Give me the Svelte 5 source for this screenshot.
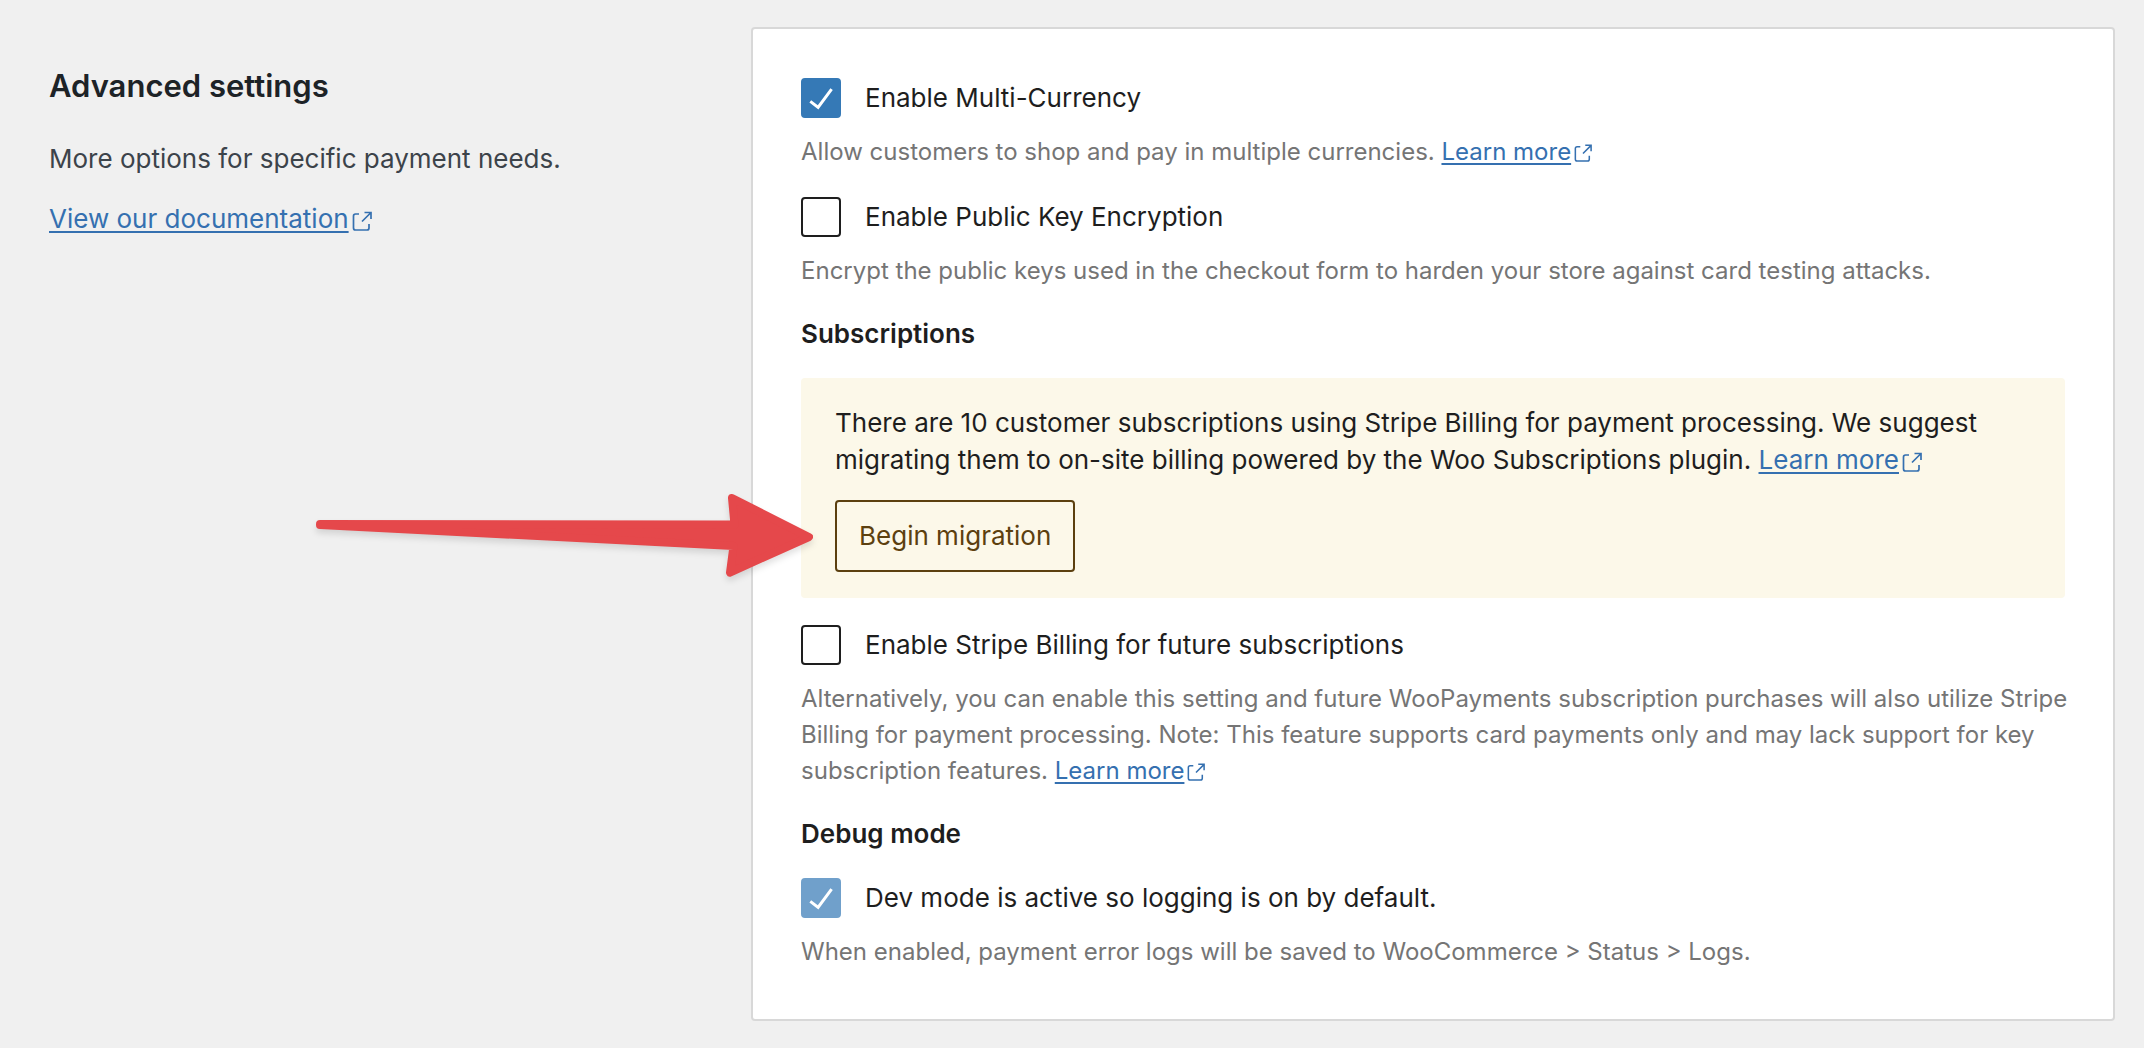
<script lang="ts">
    let multiCurrency = true;
    let publicKeyEncryption = false;
    let stripeBilling = false;
    let debugLog = true;
</script>

<style>
    :global(body) {
        background-color: #f0f0f0;
    }

    .settings-section {
        position: relative;
        display: grid;
        grid-template-columns: 35fr 68fr;
        padding: 27px 29px 27px 49px;
        color: #1e1e1e;
        font-family: Inter, "Liberation Sans", sans-serif;
        font-size: 26px;
        line-height: 36px;
    }

    .details {
        color: #3c434a;
    }

    .details h2 {
        margin: 39px 0 35px;
        color: #1d2327;
        font-size: 31px;
        font-weight: 600;
        line-height: 40px;
    }

    .details p {
        margin: 0 0 24px;
    }

    a {
        color: #3570b0;
        text-decoration: underline;
        text-decoration-thickness: 2px;
        text-underline-offset: 3px;
        white-space: nowrap;
    }

    .external {
        width: 20px;
        height: 20px;
        margin-left: 3px;
        vertical-align: -3px;
        fill: none;
        stroke: #3570b0;
        stroke-width: 1.7;
    }

    .card {
        box-sizing: border-box;
        padding: 49px 48px;
        border: 2px solid #d8d8d8;
        border-radius: 4px;
        background-color: #fff;
    }

    .control {
        margin-bottom: 27px;
    }

    .control:last-child {
        margin-bottom: 0;
    }

    .control label {
        display: flex;
        align-items: center;
        gap: 24px;
    }

    .control input {
        appearance: none;
        box-sizing: border-box;
        flex: none;
        width: 40px;
        height: 40px;
        margin: 0;
        border: 2px solid #1e1e1e;
        border-radius: 4px;
        background-color: #fff;
    }

    .control input:checked {
        border-color: #3579b6;
        background: #3579b6 url("data:image/svg+xml,%3Csvg xmlns='http://www.w3.org/2000/svg' viewBox='0 0 24 24'%3E%3Cpath fill='white' d='M16.7 7.1l-6.3 8.5-3.3-2.5-.9 1.2 4.5 3.4L17.9 8z'/%3E%3C/svg%3E") center / 48px no-repeat;
    }

    .control input:disabled {
        opacity: 0.7;
    }

    .help {
        margin: 16px -8px 0 0;
        color: #757575;
        font-size: 24px;
    }

    .help .external {
        width: 18px;
        height: 18px;
        vertical-align: -2px;
    }

    h3 {
        margin: 0 0 26px;
        font-size: 26px;
        font-weight: 600;
    }

    .notice {
        margin-bottom: 27px;
        padding: 26px 34px;
        border-radius: 4px;
        background-color: #fcf8e9;
    }

    .notice p {
        margin: 0 0 22px;
        line-height: 37px;
    }

    .notice button {
        display: block;
        padding: 16px 22px;
        border: 2px solid #5c400f;
        border-radius: 4px;
        background: transparent;
        color: #5c400f;
        font: inherit;
    }

    .pointer {
        position: absolute;
        top: 480px;
        left: 300px;
        width: 530px;
        height: 110px;
        fill: #e5484b;
        stroke: #e5484b;
        stroke-width: 8;
        stroke-linejoin: round;
        filter: drop-shadow(0 4px 3px rgba(0, 0, 0, 0.12));
        pointer-events: none;
    }
</style>

{#snippet externalIcon()}
    <svg class="external" viewBox="0 0 20 20" aria-hidden="true">
        <path d="M7 3H3.5a2 2 0 0 0-2 2v12a2 2 0 0 0 2 2h11.5a2 2 0 0 0 2-2V13M12.5 1.5H19V8M19 1.5L10 10.5" />
    </svg>
{/snippet}

<main class="settings-section">
    <div class="details">
        <h2>Advanced settings</h2>
        <p>More options for specific payment needs.</p>
        <a href="#documentation">View our documentation</a>{@render externalIcon()}
    </div>

    <div class="card">
        <div class="control">
            <label>
                <input type="checkbox" bind:checked={multiCurrency}>
                Enable Multi-Currency
            </label>
            <p class="help">
                Allow customers to shop and pay in multiple currencies.
                <a href="#multi-currency">Learn more</a>{@render externalIcon()}
            </p>
        </div>
        <div class="control">
            <label>
                <input type="checkbox" bind:checked={publicKeyEncryption}>
                Enable Public Key Encryption
            </label>
            <p class="help">
                Encrypt the public keys used in the checkout form to harden your store against card testing attacks.
            </p>
        </div>

        <h3>Subscriptions</h3>
        <div class="notice">
            <p>
                There are 10 customer subscriptions using Stripe Billing for payment processing. We suggest
                migrating them to on-site billing powered by the Woo Subscriptions plugin.
                <a href="#migration">Learn more</a>{@render externalIcon()}
            </p>
            <button type="button">Begin migration</button>
        </div>
        <div class="control">
            <label>
                <input type="checkbox" bind:checked={stripeBilling}>
                Enable Stripe Billing for future subscriptions
            </label>
            <p class="help">
                Alternatively, you can enable this setting and future WooPayments subscription purchases will also
                utilize Stripe Billing for payment processing. Note: This feature supports card payments only and may
                lack support for key subscription features.
                <a href="#stripe-billing">Learn more</a>{@render externalIcon()}
            </p>
        </div>

        <h3>Debug mode</h3>
        <div class="control">
            <label>
                <input type="checkbox" bind:checked={debugLog} disabled>
                Dev mode is active so logging is on by default.
            </label>
            <p class="help">
                When enabled, payment error logs will be saved to WooCommerce &gt; Status &gt; Logs.
            </p>
        </div>
    </div>

    <svg class="pointer" viewBox="300 480 530 110" aria-hidden="true">
        <path d="M320 524L734.5 524.5L732 498L809 537L730 572.5L733.5 546L320 525Z" />
    </svg>
</main>
